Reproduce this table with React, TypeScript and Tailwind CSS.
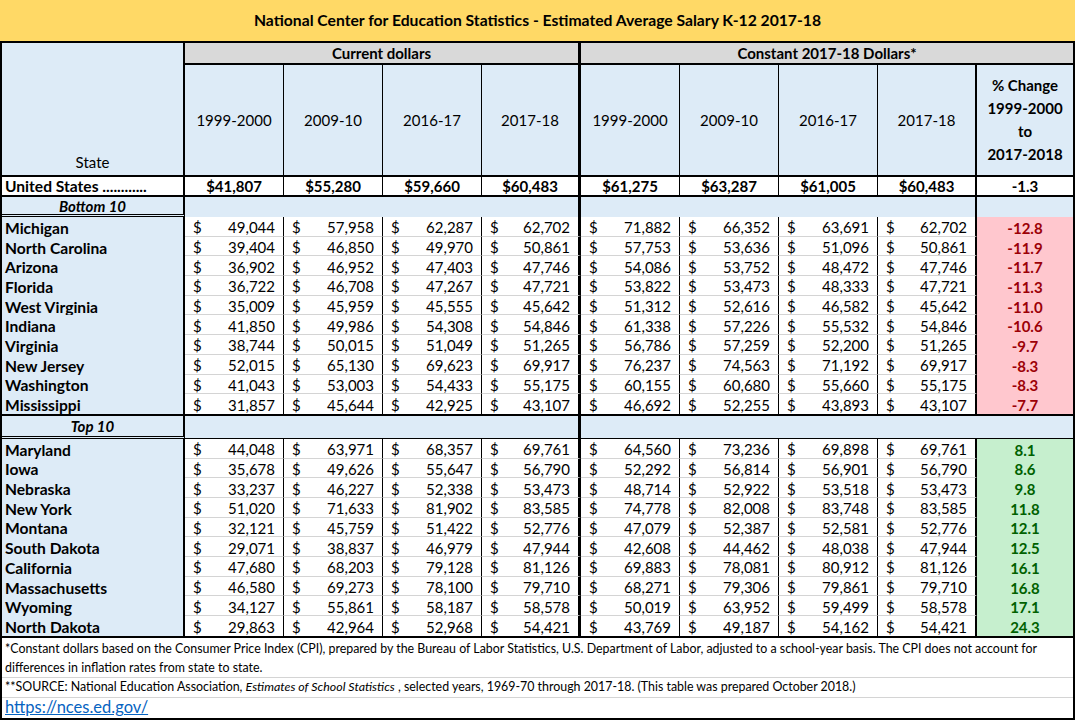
/**
 * NCES 教員平均給与テーブル
 * ============================================================================
 * Excel 風の表を Tailwind で再現する
 * ============================================================================
 */

import clsx from "clsx";

type StateRow = {
  name: string;
  current: string[];
  constant: string[];
  change: string;
};

const YEARS = ["1999-2000", "2009-10", "2016-17", "2017-18"];

const US_TOTALS = [
  "$41,807",
  "$55,280",
  "$59,660",
  "$60,483",
  "$61,275",
  "$63,287",
  "$61,005",
  "$60,483",
];

const BOTTOM_10: StateRow[] = [
  { name: "Michigan", current: ["49,044", "57,958", "62,287", "62,702"], constant: ["71,882", "66,352", "63,691", "62,702"], change: "-12.8" },
  { name: "North Carolina", current: ["39,404", "46,850", "49,970", "50,861"], constant: ["57,753", "53,636", "51,096", "50,861"], change: "-11.9" },
  { name: "Arizona", current: ["36,902", "46,952", "47,403", "47,746"], constant: ["54,086", "53,752", "48,472", "47,746"], change: "-11.7" },
  { name: "Florida", current: ["36,722", "46,708", "47,267", "47,721"], constant: ["53,822", "53,473", "48,333", "47,721"], change: "-11.3" },
  { name: "West Virginia", current: ["35,009", "45,959", "45,555", "45,642"], constant: ["51,312", "52,616", "46,582", "45,642"], change: "-11.0" },
  { name: "Indiana", current: ["41,850", "49,986", "54,308", "54,846"], constant: ["61,338", "57,226", "55,532", "54,846"], change: "-10.6" },
  { name: "Virginia", current: ["38,744", "50,015", "51,049", "51,265"], constant: ["56,786", "57,259", "52,200", "51,265"], change: "-9.7" },
  { name: "New Jersey", current: ["52,015", "65,130", "69,623", "69,917"], constant: ["76,237", "74,563", "71,192", "69,917"], change: "-8.3" },
  { name: "Washington", current: ["41,043", "53,003", "54,433", "55,175"], constant: ["60,155", "60,680", "55,660", "55,175"], change: "-8.3" },
  { name: "Mississippi", current: ["31,857", "45,644", "42,925", "43,107"], constant: ["46,692", "52,255", "43,893", "43,107"], change: "-7.7" },
];

const TOP_10: StateRow[] = [
  { name: "Maryland", current: ["44,048", "63,971", "68,357", "69,761"], constant: ["64,560", "73,236", "69,898", "69,761"], change: "8.1" },
  { name: "Iowa", current: ["35,678", "49,626", "55,647", "56,790"], constant: ["52,292", "56,814", "56,901", "56,790"], change: "8.6" },
  { name: "Nebraska", current: ["33,237", "46,227", "52,338", "53,473"], constant: ["48,714", "52,922", "53,518", "53,473"], change: "9.8" },
  { name: "New York", current: ["51,020", "71,633", "81,902", "83,585"], constant: ["74,778", "82,008", "83,748", "83,585"], change: "11.8" },
  { name: "Montana", current: ["32,121", "45,759", "51,422", "52,776"], constant: ["47,079", "52,387", "52,581", "52,776"], change: "12.1" },
  { name: "South Dakota", current: ["29,071", "38,837", "46,979", "47,944"], constant: ["42,608", "44,462", "48,038", "47,944"], change: "12.5" },
  { name: "California", current: ["47,680", "68,203", "79,128", "81,126"], constant: ["69,883", "78,081", "80,912", "81,126"], change: "16.1" },
  { name: "Massachusetts", current: ["46,580", "69,273", "78,100", "79,710"], constant: ["68,271", "79,306", "79,861", "79,710"], change: "16.8" },
  { name: "Wyoming", current: ["34,127", "55,861", "58,187", "58,578"], constant: ["50,019", "63,952", "59,499", "58,578"], change: "17.1" },
  { name: "North Dakota", current: ["29,863", "42,964", "52,968", "54,421"], constant: ["43,769", "49,187", "54,162", "54,421"], change: "24.3" },
];

// 列ごとの右罫線（4列目と8列目は太線）
const COL_BORDER = [
  "border-r border-r-black",
  "border-r border-r-black",
  "border-r border-r-black",
  "border-r-[3px] border-r-black",
  "border-r border-r-black",
  "border-r border-r-black",
  "border-r border-r-black",
  "border-r-2 border-r-black",
];

function StateCell({ children, className }: { children: React.ReactNode; className?: string }) {
  return (
    <div
      className={clsx(
        "flex w-[183px] shrink-0 items-center border-r-2 border-r-black bg-[#ddebf7] pl-[3px] pt-[2px] text-[15.6px] font-bold",
        className
      )}
    >
      {children}
    </div>
  );
}

function DataRow({ row, last, tone }: { row: StateRow; last: boolean; tone: "bad" | "good" }) {
  const values = [...row.current, ...row.constant];
  return (
    <div className="flex h-[19.7px] leading-[18px]">
      <StateCell>{row.name}</StateCell>
      {values.map((v, i) => (
        <div
          key={i}
          className={clsx(
            "flex w-[99px] shrink-0 items-center justify-between bg-white pl-[8px] pr-[8px] pt-[2px]",
            COL_BORDER[i],
            !last && "border-b border-b-[#d4d4d4]"
          )}
        >
          <span>$</span>
          <span>{v}</span>
        </div>
      ))}
      <div
        className={clsx(
          "flex w-[96px] shrink-0 items-center justify-center pt-[2px] font-bold",
          tone === "bad" ? "bg-[#ffc7ce] text-[#9c0006]" : "bg-[#c6efce] text-[#006100]"
        )}
      >
        {row.change}
      </div>
    </div>
  );
}

export default function App() {
  return (
    <div className="w-[1075px] bg-white font-[Lato,sans-serif] text-[15px] text-black">
      {/* タイトル */}
      <div className="flex h-[43px] items-center justify-center border-b-2 border-black bg-[#ffd966] text-[15.7px] font-bold">
        National Center for Education Statistics - Estimated Average Salary K-12 2017-18
      </div>

      <div className="border-x-2 border-black">
        {/* ヘッダー */}
        <div className="flex h-[134px] border-b-2 border-black">
          <div className="flex w-[183px] shrink-0 items-end justify-center border-r-2 border-r-black bg-[#ddebf7] pb-[2px]">
            State
          </div>
          <div className="flex flex-col">
            <div className="flex h-[22px] border-b-2 border-black bg-[#d9d9d9] font-bold">
              <div className="flex w-[396px] items-center justify-center border-r-[3px] border-r-black">
                Current dollars
              </div>
              <div className="flex w-[492px] items-center justify-center">Constant 2017-18 Dollars*</div>
            </div>
            <div className="flex h-[110px] bg-[#ddebf7]">
              {[...YEARS, ...YEARS].map((y, i) => (
                <div key={i} className={clsx("flex w-[99px] shrink-0 items-center justify-center", COL_BORDER[i])}>
                  {y}
                </div>
              ))}
              <div className="flex w-[96px] shrink-0 flex-col items-center justify-center font-bold leading-[23px]">
                <span>% Change</span>
                <span>1999-2000</span>
                <span>to</span>
                <span>2017-2018</span>
              </div>
            </div>
          </div>
        </div>

        {/* 全国平均 */}
        <div className="flex h-[20px] border-b-2 border-black bg-white font-bold leading-[18px]">
          <div className="flex w-[183px] shrink-0 items-center border-r-2 border-r-black pl-[3px] text-[15.6px]">
            United States ............
          </div>
          {US_TOTALS.map((v, i) => (
            <div key={i} className={clsx("flex w-[99px] shrink-0 items-center justify-center", COL_BORDER[i])}>
              {v}
            </div>
          ))}
          <div className="flex w-[96px] shrink-0 items-center justify-center">-1.3</div>
        </div>

        {/* Bottom 10 */}
        <div className="flex h-[20px] bg-[#ddebf7] leading-[18px]">
          <div className="flex w-[183px] shrink-0 items-center justify-center border-b-[3px] border-double border-b-black border-r-2 border-r-black font-bold italic">
            Bottom 10
          </div>
          <div className="w-[396px] shrink-0 border-r-[3px] border-r-black" />
          <div className="w-[396px] shrink-0 border-r-2 border-r-black" />
          <div className="w-[96px] shrink-0" />
        </div>
        {BOTTOM_10.map((row, i) => (
          <DataRow key={row.name} row={row} last={i === BOTTOM_10.length - 1} tone="bad" />
        ))}

        {/* Top 10 */}
        <div className="flex h-[25px] border-t-2 border-black bg-[#ddebf7] leading-[18px]">
          <div className="flex w-[183px] shrink-0 items-center justify-center border-b-[3px] border-double border-b-black border-r-2 border-r-black font-bold italic">
            Top 10
          </div>
          <div className="w-[396px] shrink-0 border-b border-b-black border-r-[3px] border-r-black" />
          <div className="w-[492px] shrink-0 border-b border-b-black" />
        </div>
        {TOP_10.map((row, i) => (
          <DataRow key={row.name} row={row} last={i === TOP_10.length - 1} tone="good" />
        ))}

        {/* 注記 */}
        <div className="border-y-2 border-black text-[12.4px]">
          <div className="border-b border-[#d4d4d4] px-[3px] pt-[1px] leading-[19px]">
            <div className="whitespace-nowrap">
              *Constant dollars based on the Consumer Price Index (CPI), prepared by the Bureau of Labor Statistics,
              U.S. Department of Labor, adjusted to a school-year basis. The CPI does not account for
            </div>
            <div>differences in inflation rates from state to state.</div>
          </div>
          <div className="flex h-[20px] items-center whitespace-nowrap border-b border-[#d4d4d4] px-[3px]">
            **SOURCE: National Education Association,&nbsp;<i>Estimates of School Statistics</i>&nbsp;, selected years,
            1969-70 through 2017-18. (This table was prepared October 2018.)
          </div>
          <div className="flex h-[20px] items-center px-[3px] text-[16.5px]">
            <a href="https://nces.ed.gov/" className="text-[#0563c1] underline">
              https://nces.ed.gov/
            </a>
          </div>
        </div>
      </div>
    </div>
  );
}
